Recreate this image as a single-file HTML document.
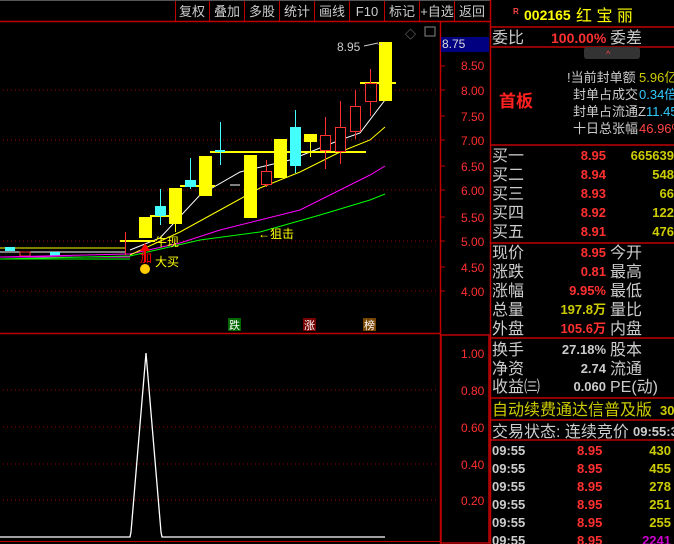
<!DOCTYPE html>
<html><head><meta charset="utf-8"><style>
*{margin:0;padding:0}
body{width:674px;height:544px;background:#000;overflow:hidden;position:relative;font-family:"Liberation Sans","Noto Sans CJK SC",sans-serif}
svg{position:absolute;left:0;top:0}
</style></head><body>
<svg width="674" height="544" xmlns="http://www.w3.org/2000/svg" font-family="Liberation Sans, Noto Sans CJK SC, sans-serif">
<line x1="0" y1="0.5" x2="490" y2="0.5" stroke="#555"/>
<line x1="0" y1="21.5" x2="490" y2="21.5" stroke="#c00000" stroke-width="1.5"/>
<g stroke="#c00000"><line x1="175.5" y1="1" x2="175.5" y2="21"/><line x1="209.5" y1="1" x2="209.5" y2="21"/><line x1="244.5" y1="1" x2="244.5" y2="21"/><line x1="279.5" y1="1" x2="279.5" y2="21"/><line x1="314.5" y1="1" x2="314.5" y2="21"/><line x1="349.5" y1="1" x2="349.5" y2="21"/><line x1="384.5" y1="1" x2="384.5" y2="21"/><line x1="419.5" y1="1" x2="419.5" y2="21"/><line x1="454.5" y1="1" x2="454.5" y2="21"/></g>
<g fill="#ccc" font-size="13" text-anchor="middle"><text x="192" y="16">复权</text><text x="227" y="16">叠加</text><text x="262" y="16">多股</text><text x="297" y="16">统计</text><text x="332" y="16">画线</text><text x="367" y="16">F10</text><text x="402" y="16">标记</text><text x="437" y="16">+自选</text><text x="472" y="16">返回</text></g>
<line x1="440.5" y1="22" x2="440.5" y2="544" stroke="#c00000" stroke-width="1.5"/>
<line x1="0" y1="333.5" x2="440" y2="333.5" stroke="#c00000" stroke-width="1.5"/>
<line x1="0" y1="541.5" x2="440" y2="541.5" stroke="#c00000"/>
<rect x="441" y="335" width="48" height="208" fill="none" stroke="#c00000" stroke-width="1.5"/>
<line x1="490.5" y1="0" x2="490.5" y2="544" stroke="#c00000" stroke-width="1.5"/>
<g stroke="#a00000" stroke-dasharray="1,3"><line x1="3" y1="90" x2="436" y2="90"/><line x1="3" y1="140" x2="436" y2="140"/><line x1="3" y1="190" x2="436" y2="190"/><line x1="3" y1="241" x2="436" y2="241"/><line x1="3" y1="291" x2="436" y2="291"/>
<line x1="3" y1="390" x2="436" y2="390"/><line x1="3" y1="427" x2="436" y2="427"/><line x1="3" y1="464" x2="436" y2="464"/><line x1="3" y1="500" x2="436" y2="500"/></g>
<rect x="441" y="37" width="48" height="15" fill="#000080"/>
<text x="442" y="48" fill="#ddd" font-size="12">8.75</text>
<g fill="#ff3030" font-size="12"><text x="461" y="70">8.50</text><text x="461" y="95">8.00</text><text x="461" y="121">7.50</text><text x="461" y="145">7.00</text><text x="461" y="171">6.50</text><text x="461" y="195">6.00</text><text x="461" y="222">5.50</text><text x="461" y="246">5.00</text><text x="461" y="272">4.50</text><text x="461" y="296">4.00</text>
<text x="461" y="358">1.00</text><text x="461" y="395">0.80</text><text x="461" y="432">0.60</text><text x="461" y="469">0.40</text><text x="461" y="505">0.20</text></g>
<g stroke="#c00000"><line x1="441" y1="66" x2="445" y2="66"/><line x1="441" y1="90" x2="445" y2="90"/><line x1="441" y1="116" x2="445" y2="116"/><line x1="441" y1="140" x2="445" y2="140"/><line x1="441" y1="166" x2="445" y2="166"/><line x1="441" y1="190" x2="445" y2="190"/><line x1="441" y1="217" x2="445" y2="217"/><line x1="441" y1="241" x2="445" y2="241"/><line x1="441" y1="267" x2="445" y2="267"/><line x1="441" y1="291" x2="445" y2="291"/></g>
<text x="405" y="38" fill="#888" font-size="11">◇</text><rect x="425" y="27" width="10" height="9" fill="none" stroke="#888"/>
<g stroke-width="1"><line x1="0" y1="248" x2="125" y2="248" stroke="#ff0"/><line x1="0" y1="252" x2="125" y2="252" stroke="#fff"/><line x1="0" y1="257" x2="130" y2="257" stroke="#f0f"/><line x1="0" y1="259" x2="130" y2="259" stroke="#0f0"/></g>
<rect x="5" y="247" width="10" height="4" fill="#4ff"/><rect x="50" y="252" width="10" height="4" fill="#4ff"/><rect x="20" y="252" width="10" height="4" fill="none" stroke="#f33"/>
<polyline fill="none" stroke="#0f0" points="0,259 130,256 200,240 260,232 320,215 370,200 385,194"/>
<polyline fill="none" stroke="#f0f" points="0,257 130,254 180,243 220,230 260,220 300,210 340,190 370,175 385,166"/>
<polyline fill="none" stroke="#ff0" points="130,255 180,232 220,210 260,188 300,172 340,152 370,140 385,127"/>
<polyline fill="none" stroke="#fff" points="130,250 160,238 200,195 240,172 290,160 340,140 360,133 385,100"/>
<g stroke="#ff0" stroke-width="2"><line x1="120" y1="241" x2="155" y2="241"/><line x1="150" y1="216" x2="182" y2="216"/><line x1="180" y1="186" x2="215" y2="186"/><line x1="210" y1="152" x2="366" y2="152"/><line x1="360" y1="83" x2="396" y2="83"/></g>
<g stroke="#4ff"><line x1="160.5" y1="189" x2="160.5" y2="225"/><line x1="190.5" y1="158" x2="190.5" y2="189"/><line x1="220.5" y1="122" x2="220.5" y2="165"/><line x1="295.5" y1="110" x2="295.5" y2="173"/></g>
<g fill="#4ff"><rect x="155" y="206" width="11" height="10"/><rect x="185" y="180" width="11" height="7"/><rect x="215" y="150" width="10" height="2"/><rect x="290" y="127" width="11" height="39"/></g>
<g stroke="#ff3030"><line x1="266.5" y1="160" x2="266.5" y2="187"/><line x1="325.5" y1="117" x2="325.5" y2="169"/><line x1="340.5" y1="101" x2="340.5" y2="164"/><line x1="355.5" y1="90" x2="355.5" y2="139"/><line x1="370.5" y1="69" x2="370.5" y2="116"/><line x1="125.5" y1="232" x2="125.5" y2="255"/></g>
<g fill="#000" stroke="#ff3030"><rect x="261.5" y="171.5" width="10" height="13"/><rect x="320.5" y="135.5" width="10" height="15"/><rect x="335.5" y="127.5" width="10" height="24"/><rect x="350.5" y="106.5" width="10" height="25"/><rect x="365.5" y="83.5" width="11" height="18"/></g>
<line x1="310.5" y1="140" x2="310.5" y2="157" stroke="#ff0"/><line x1="175.5" y1="224" x2="175.5" y2="232" stroke="#ff0"/>
<g fill="#ff0"><rect x="139" y="217" width="13" height="21"/><rect x="169" y="188" width="13" height="36"/><rect x="199" y="156" width="13" height="40"/><rect x="244" y="155" width="13" height="63"/><rect x="274" y="139" width="13" height="39"/><rect x="304" y="134" width="13" height="8"/><rect x="379" y="42" width="13" height="59"/></g>
<line x1="230" y1="185" x2="240" y2="185" stroke="#fff"/>
<text x="337" y="51" fill="#ccc" font-size="12">8.95</text><polyline points="364,46 378,43" fill="none" stroke="#ccc"/><text x="376" y="46" fill="#ccc" font-size="8">→</text>
<text x="155" y="246" fill="#ff0" font-size="12">牛现</text>
<text x="258" y="238" fill="#ff0" font-size="12">←狙击</text>
<polygon points="145,243 140,251 150,251" fill="#f00"/><line x1="145" y1="250" x2="145" y2="262" stroke="#f00" stroke-width="2"/>
<text x="140" y="262" fill="#f00" font-size="12">加</text><text x="155" y="266" fill="#ff0" font-size="12">大买</text>
<circle cx="145" cy="269" r="5" fill="#fc0"/>
<rect x="228" y="318" width="13" height="13" fill="#060"/><text x="229" y="329" fill="#fff" font-size="11">跌</text>
<rect x="303" y="318" width="13" height="13" fill="#700"/><text x="304" y="329" fill="#fff" font-size="11">涨</text>
<rect x="363" y="318" width="13" height="13" fill="#740"/><text x="364" y="329" fill="#fff" font-size="11">榜</text>
<polyline fill="none" stroke="#fff" stroke-width="1.3" points="0,537 130,537 131,532 146,353 161,532 162,537 385,537"/>
<g stroke="#c00000" stroke-width="1.5"><line x1="490" y1="27" x2="674" y2="27"/><line x1="490" y1="47" x2="674" y2="47"/><line x1="490" y1="145" x2="674" y2="145"/><line x1="490" y1="243" x2="674" y2="243"/><line x1="490" y1="338" x2="674" y2="338"/><line x1="490" y1="398" x2="674" y2="398"/><line x1="490" y1="420" x2="674" y2="420"/><line x1="490" y1="440" x2="674" y2="440"/></g>
<text x="513" y="14" fill="#f44" font-size="8" font-weight="bold">R</text>
<text x="524" y="20" fill="#ff0" font-size="14" font-weight="bold">002165</text><text x="576" y="21" fill="#ff0" font-size="16">红 宝 丽</text>
<text x="492" y="43" fill="#ccc" font-size="16">委比</text><text x="551" y="43" fill="#ff3030" font-size="14" font-weight="bold">100.00%</text><text x="610" y="43" fill="#ccc" font-size="16">委差</text>
<rect x="584" y="47" width="56" height="12" rx="3" fill="#333"/><text x="606" y="57" fill="#f44" font-size="9">^</text>
<text x="499" y="107" fill="#ff2020" font-size="17" font-weight="bold">首板</text>
<g font-size="13"><text x="567" y="82" fill="#ccc">ǃ当前封单额</text><text x="639" y="82" fill="#cc0">5.96亿</text>
<text x="573" y="99" fill="#ccc">封单占成交</text><text x="639" y="99" fill="#3cf">0.34倍</text>
<text x="573" y="116" fill="#ccc">封单占流通Z</text><text x="646" y="116" fill="#3cf">11.45</text>
<text x="573" y="133" fill="#ccc">十日总张幅</text><text x="639" y="133" fill="#f44">46.96%</text></g>
<g font-size="16" fill="#ccc"><text x="492" y="161">买一</text><text x="492" y="180">买二</text><text x="492" y="199">买三</text><text x="492" y="218">买四</text><text x="492" y="237">买五</text>
<text x="492" y="258">现价</text><text x="492" y="277">涨跌</text><text x="492" y="296">涨幅</text><text x="492" y="315">总量</text><text x="492" y="334">外盘</text>
<text x="610" y="258">今开</text><text x="610" y="277">最高</text><text x="610" y="296">最低</text><text x="610" y="315">量比</text><text x="610" y="334">内盘</text>
<text x="492" y="355">换手</text><text x="492" y="374">净资</text><text x="492" y="392">收益㈢</text>
<text x="610" y="355">股本</text><text x="610" y="374">流通</text><text x="610" y="392">PE(动)</text>
<text x="492" y="437">交易状态: 连续竞价</text></g>
<g font-size="13" font-weight="bold" text-anchor="end"><g fill="#ff3030"><text x="606" y="160">8.95</text><text x="606" y="179">8.94</text><text x="606" y="198">8.93</text><text x="606" y="217">8.92</text><text x="606" y="236">8.91</text>
<text x="606" y="257">8.95</text><text x="606" y="276">0.81</text><text x="606" y="295">9.95%</text><text x="606" y="333">105.6万</text></g>
<text x="606" y="314" fill="#cc0">197.8万</text>
<g fill="#cc0"><text x="674" y="160">665639</text><text x="674" y="179">548</text><text x="674" y="198">66</text><text x="674" y="217">122</text><text x="674" y="236">476</text></g>
<g fill="#ccc"><text x="606" y="354">27.18%</text><text x="606" y="373">2.74</text><text x="606" y="391">0.060</text></g></g>
<text x="492" y="415" fill="#cc0" font-size="16">自动续费通达信普及版</text><text x="660" y="415" fill="#cc0" font-size="13" font-weight="bold">30</text>
<text x="633" y="436" fill="#ccc" font-size="13" font-weight="bold">09:55:3</text>
<g font-size="13" font-weight="bold"><g fill="#ccc"><text x="492" y="455">09:55</text><text x="492" y="473">09:55</text><text x="492" y="491">09:55</text><text x="492" y="509">09:55</text><text x="492" y="527">09:55</text><text x="492" y="545">09:55</text></g>
<g fill="#ff3030"><text x="577" y="455">8.95</text><text x="577" y="473">8.95</text><text x="577" y="491">8.95</text><text x="577" y="509">8.95</text><text x="577" y="527">8.95</text><text x="577" y="545">8.95</text></g>
<g fill="#cc0" text-anchor="end"><text x="671" y="455">430</text><text x="671" y="473">455</text><text x="671" y="491">278</text><text x="671" y="509">251</text><text x="671" y="527">255</text><text x="671" y="545" fill="#c0c">2241</text></g></g>
</svg>
</body></html>
